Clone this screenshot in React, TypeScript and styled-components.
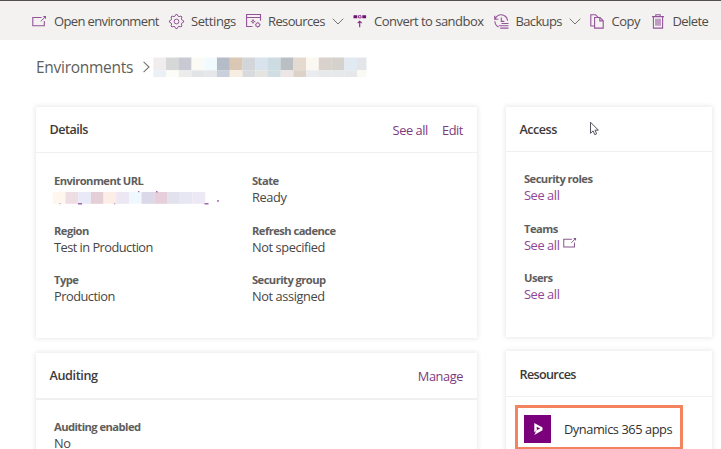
import React from "react";
import styled, { createGlobalStyle } from "styled-components";

const GlobalStyle = createGlobalStyle`
  * { box-sizing: border-box; }
  html, body { margin: 0; background: #fff; overflow: hidden; }
  body { font-family: "Open Sans", "Noto Sans", sans-serif; color: #484644; }
`;

const Page = styled.div`
  width: 721px;
  height: 449px;
  overflow: hidden;
  background: #fff;
`;

const Toolbar = styled.header`
  display: flex;
  height: 40px;
  padding-left: 32px;
  border-top: 1px solid #55504f;
  background: #f3f2f1;
`;

const Command = styled.div<{ $width: number; $gutter: number }>`
  display: grid;
  grid-template-columns: ${(p) => p.$gutter}px auto 1fr;
  align-items: center;
  flex: none;
  width: ${(p) => p.$width}px;
  height: 40px;
  color: #4f4c4a;
  white-space: nowrap;
  svg { display: block; overflow: visible; }
`;

const Label = styled.span<{ $track: number }>`
  font-size: 13px;
  line-height: 20px;
  letter-spacing: ${(p) => p.$track}px;
  white-space: nowrap;
`;

const ChevronSlot = styled.span`
  padding-left: 7px;
`;

const Breadcrumb = styled.nav`
  display: flex;
  align-items: flex-start;
  height: 67px;
  padding: 15px 0 0 36px;
`;

const Crumb = styled.span`
  width: 107px;
  font-size: 15.5px;
  line-height: 24px;
  letter-spacing: -0.28px;
  color: #605e5c;
`;

const CrumbArrow = styled.span`
  width: 10px;
  padding-top: 6px;
  svg { display: block; }
`;

const Mosaic = styled.svg`
  display: block;
  margin-top: 2px;
`;

const Columns = styled.main`
  display: grid;
  grid-template-columns: 441px 206px;
  column-gap: 29px;
  padding-left: 36px;
`;

const Column = styled.div<{ $gap: number }>`
  display: flex;
  flex-direction: column;
  gap: ${(p) => p.$gap}px;
`;

const Card = styled.section<{ $height: number }>`
  height: ${(p) => p.$height}px;
  background: #fff;
  box-shadow: 0 0 5px 1px rgba(0, 0, 0, 0.09);
`;

const CardHeader = styled.div<{ $height: number; $rule: number }>`
  display: flex;
  align-items: center;
  height: ${(p) => p.$height}px;
  padding: 0 14px 0 13.5px;
  border-bottom: ${(p) => p.$rule}px solid #f1f0f0;
`;

const Title = styled.h2<{ $track?: number; $drop?: number }>`
  margin: 0 auto 0 0;
  padding-top: ${(p) => p.$drop ?? 0}px;
  font-size: 12.6px;
  font-weight: 600;
  line-height: 20px;
  letter-spacing: ${(p) => p.$track ?? -0.5}px;
  color: #3b3a39;
`;

const Action = styled.a`
  margin-left: 14px;
  font-size: 12.8px;
  line-height: 20px;
  letter-spacing: -0.42px;
  color: #7d3a80;
`;

const Fields = styled.dl<{ $columns: string; $top: number }>`
  display: grid;
  grid-template-columns: ${(p) => p.$columns};
  grid-auto-rows: 49.5px;
  margin: 0;
  padding: ${(p) => p.$top}px 18px 0;
`;

const Term = styled.dt`
  font-size: 11.2px;
  font-weight: 700;
  line-height: 16px;
  letter-spacing: -0.55px;
  color: #605e5c;
  white-space: nowrap;
`;

const Value = styled.dd<{ $link?: boolean; $track?: number }>`
  display: flex;
  margin: 0;
  font-size: 12.8px;
  line-height: 16px;
  letter-spacing: ${(p) => p.$track ?? -0.4}px;
  color: ${(p) => (p.$link ? "#914496" : "#484644")};
  white-space: nowrap;
  svg { display: block; margin: 0 0 0 3px; overflow: visible; }
`;

const HiddenUrl = styled.svg`
  display: block;
  margin-left: -2px;
`;

const AppLink = styled.div`
  display: flex;
  align-items: center;
  width: 168px;
  height: 45px;
  margin: 8px 0 0 8.5px;
  padding-left: 6.5px;
  border: 3px solid #f4845f;
`;

const AppTile = styled.span`
  display: flex;
  width: 27px;
  height: 28px;
  margin: 2px 13px 0 0;
  background: #7a007c;
`;

const AppName = styled.span`
  padding-top: 3px;
  font-size: 12.8px;
  line-height: 20px;
  letter-spacing: -0.43px;
  color: #323130;
  white-space: nowrap;
`;

const Pointer = styled.svg`
  position: absolute;
  left: 589px;
  top: 121px;
`;

const purple = "#94539a";

const OpenIcon = ({ color = purple, size = 15 }: { color?: string; size?: number }) => (
  <svg width={size} height={(size * 13) / 15} viewBox="0 0 15 13" fill="none" stroke={color}>
    <path d="M9.5 2.5H.8v8.3h11.5V6" strokeWidth="1.1" />
    <path d="M8.8 6.3l4-4" strokeWidth="1" />
    <path d="M10.8 1h3.2v3.2z" fill={color} stroke="none" />
  </svg>
);

const gearPath = Array.from({ length: 32 }, (_, i) => {
  const r = i % 4 < 2 ? 7.1 : 5.5;
  const a = ((i - 0.5) * Math.PI) / 16;
  return `${i ? "L" : "M"}${(7.5 + r * Math.cos(a)).toFixed(2)} ${(7.5 + r * Math.sin(a)).toFixed(2)}`;
}).join("") + "Z";

const GearIcon = () => (
  <svg width="15" height="15" viewBox="0 0 15 15" fill="none" stroke={purple} strokeLinejoin="round">
    <path d={gearPath} />
    <circle cx="7.5" cy="7.5" r="2.4" />
  </svg>
);

const ResourcesIcon = () => (
  <svg width="16" height="14" viewBox="0 0 16 14" fill="none" stroke={purple}>
    <path d="M6.5 12.5H.6V.5h13.9v6.3M.6 3.5h13.9" strokeWidth="1.1" />
    <circle cx="7" cy="7.5" r="1.1" />
    <path d="M7 5.3v1M7 8.7v1M4.8 7.5h1M8.2 7.5h1" />
    <circle cx="11.7" cy="10.8" r="1.9" />
    <path d="M11.7 7.8v1.1M11.7 12.7v1.1M8.9 10.8H10M13.6 10.8h1M9.7 8.8l.6.6M13.1 12.2l.6.6M13.7 8.8l-.6.6M10.3 12.2l-.6.6" strokeWidth=".8" />
  </svg>
);

const ConvertIcon = () => (
  <svg width="14" height="13" viewBox="0 0 14 13" fill="none" stroke="#812784">
    <path d="M.5.3h3.8v3H.5zM9.3.3h3.8v3H9.3z" fill="#6e1272" stroke="none" />
    <path d="M5.5.7H8v2.2H5.5z" strokeWidth=".9" />
    <path d="M6.7 12.3V6.5M4.7 8.2l2-2 2 2" strokeWidth="1.1" />
  </svg>
);

const BackupIcon = () => (
  <svg width="15" height="15" viewBox="0 0 15 15" fill="none" stroke={purple}>
    <path d="M.7 1.8v3.5h3.7M1.2 5C2.3 2.1 4.5.8 7.2.8c3.4 0 6.2 2.5 6.4 6M.8 7.2c.2 2.7 1.6 4.7 3.8 5.8" strokeWidth="1.1" />
    <path d="M7.3 3.4v4h3" strokeWidth="1.1" />
    <path d="M7.5 9.5h7M4.8 11.8h9.7M6.2 14.1h8.3" strokeWidth="1.1" />
  </svg>
);

const CopyIcon = () => (
  <svg width="14" height="15" viewBox="0 0 14 15" fill="none" stroke={purple} strokeWidth="1.1">
    <path d="M4.5 12H.8V.7h4.7l2.4 2.4" />
    <path d="M4.6 3.5H10l3.2 3.2v7.4H4.6z" />
    <path d="M9.8 3.7v3.2H13" />
  </svg>
);

const DeleteIcon = () => (
  <svg width="12" height="15" viewBox="0 0 12 15" fill="none" stroke={purple} strokeWidth="1.1">
    <path d="M0 2.6h12M3.8 2.4V.7h4.4v1.7M1.4 2.8v11.3h9.2V2.8" />
    <path d="M4 4.8v7M6 4.8v7M8 4.8v7" />
  </svg>
);

const ChevronDown = () => (
  <svg width="12" height="7" viewBox="0 0 12 7" fill="none" stroke="#777472">
    <path d="M.7.7L6 6l5.3-5.3" />
  </svg>
);

const ChevronRight = () => (
  <svg width="8" height="12" viewBox="0 0 8 12" fill="none" stroke="#777472" strokeWidth="1.1">
    <path d="M.6.8L6 6 .6 11.2" />
  </svg>
);

const commands = [
  { label: "Open environment", icon: <OpenIcon />, width: 137, gutter: 22, track: -0.63 },
  { label: "Settings", icon: <GearIcon />, width: 77, gutter: 22, track: -0.42 },
  { label: "Resources", icon: <ResourcesIcon />, width: 107, gutter: 22, track: -0.62, menu: true },
  { label: "Convert to sandbox", icon: <ConvertIcon />, width: 141, gutter: 21, track: -0.52 },
  { label: "Backups", icon: <BackupIcon />, width: 96, gutter: 21.5, track: -0.65, menu: true },
  { label: "Copy", icon: <CopyIcon />, width: 62, gutter: 21.5, track: -0.5 },
  { label: "Delete", icon: <DeleteIcon />, width: 60, gutter: 20.5, track: -0.58 },
];

const nameTop = ["#f1edee", "#d6d8d8", "#c9c9d4", "#fbfbf6", "#f1fbfd", "#b6bbc8", "#dac8b4", "#d2d6da", "#d9e3ed", "#cddce3", "#b9bfc3", "#e4dad0", "#fbf8f2", "#d9d1cc", "#d5d1cc", "#e1e9f2", "#e3e5e8"];
const nameBottom = ["#ebeff6", "#fdfdf8", "#ececed", "#e3e4e6", "#e6e7e8", "#c9d0db", "#f7eee1", "#d8dadc", "#e4e4e3", "#d0dde3", "#ece7e4", "#dcd2c8", "#e9ebee", "#e7e8ea", "#e7e8ea", "#e5e7e9", "#fafaf5"];
const urlTiles = ["#fef7ef", "#eedde2", "#e8ebf7", "#e5cfd6", "#fceee6", "#ece7f2", "#eff8ff", "#dad8e9", "#e7cedb", "#e2e1ec", "#e7e7f4", "#ede9f4"];

const RedactedName = () => (
  <Mosaic width="214" height="21" viewBox="0 0 214 21">
    {nameTop.map((c, i) => (
      <rect key={i} x={0.3 + i * 12.73} y="0.5" width={i === 16 ? 9.5 : 12.9} height="12.9" fill={c} />
    ))}
    {nameBottom.map((c, i) => (
      <rect key={i} x={0.3 + i * 12.73} y="13.3" width={i === 16 ? 9.5 : 12.9} height="6.7" fill={c} />
    ))}
  </Mosaic>
);

const RedactedUrl = () => (
  <HiddenUrl width="170" height="17" viewBox="0 0 170 17">
    {urlTiles.map((c, i) => (
      <rect key={i} x={0.7 + i * 12.7} y="3" width="12.8" height="11.8" fill={c} />
    ))}
    <g fill="#9e67ab">
      <rect x="26" y="14" width="4" height="1.5" />
      <rect x="152.5" y="14" width="4" height="1.5" />
      <rect x="7" y="14" width="2" height="1.2" opacity=".4" />
      <rect x="62" y="14" width="1.3" height="1.4" opacity=".6" />
      <rect x="86" y="2" width="1.3" height="1.2" />
      <rect x="104" y="2" width="1.6" height="1.4" />
      <rect x="165.2" y="11" width="1.6" height="1.8" />
    </g>
  </HiddenUrl>
);

export default function App() {
  return (
    <Page>
      <GlobalStyle />
      <Toolbar>
        {commands.map((c) => (
          <Command key={c.label} $width={c.width} $gutter={c.gutter}>
            {c.icon}
            <Label $track={c.track}>{c.label}</Label>
            {c.menu && <ChevronSlot><ChevronDown /></ChevronSlot>}
          </Command>
        ))}
      </Toolbar>
      <Breadcrumb>
        <Crumb>Environments</Crumb>
        <CrumbArrow><ChevronRight /></CrumbArrow>
        <RedactedName />
      </Breadcrumb>
      <Columns>
        <Column $gap={15}>
          <Card $height={231}>
            <CardHeader $height={46} $rule={1}>
              <Title>Details</Title>
              <Action>See all</Action>
              <Action>Edit</Action>
            </CardHeader>
            <Fields $columns="198px auto" $top={20}>
              <div><Term>Environment URL</Term><RedactedUrl /></div>
              <div><Term>State</Term><Value>Ready</Value></div>
              <div><Term>Region</Term><Value $track={-0.53}>Test in Production</Value></div>
              <div><Term>Refresh cadence</Term><Value>Not specified</Value></div>
              <div><Term>Type</Term><Value $track={-0.5}>Production</Value></div>
              <div><Term>Security group</Term><Value>Not assigned</Value></div>
            </Fields>
          </Card>
          <Card $height={231}>
            <CardHeader $height={47} $rule={2}>
              <Title $track={-0.37}>Auditing</Title>
              <Action>Manage</Action>
            </CardHeader>
            <Fields $columns="auto" $top={19}>
              <div><Term>Auditing enabled</Term><Value>No</Value></div>
            </Fields>
          </Card>
        </Column>
        <Column $gap={14}>
          <Card $height={230}>
            <CardHeader $height={45} $rule={1}>
              <Title $drop={1}>Access</Title>
            </CardHeader>
            <Fields $columns="auto" $top={19.4}>
              <div><Term>Security roles</Term><Value $link>See all</Value></div>
              <div><Term>Teams</Term><Value $link>See all<OpenIcon color="#86588b" size={14} /></Value></div>
              <div><Term>Users</Term><Value $link>See all</Value></div>
            </Fields>
          </Card>
          <Card $height={231}>
            <CardHeader $height={46} $rule={1}>
              <Title $drop={2} $track={-0.65}>Resources</Title>
            </CardHeader>
            <AppLink>
              <AppTile>
                <svg width="27" height="28" viewBox="0 0 27 28">
                  <path fill="#fff" fillRule="evenodd" d="M10.3 8l8.2 4.5v2.8l-8.2 4.6 2.2-4.7 3.7-1.6-3.6-1.8.4 3.6-2.7 1.9z" />
                </svg>
              </AppTile>
              <AppName>Dynamics 365 apps</AppName>
            </AppLink>
          </Card>
        </Column>
      </Columns>
      <Pointer width="11" height="16" viewBox="0 0 11 16">
        <path d="M1.5 1.2v11.1l2.6-2.4 1.7 3.8 1.9-.9-1.7-3.6h3.4z" fill="#fff" stroke="#55525f" strokeWidth="1" />
      </Pointer>
    </Page>
  );
}
